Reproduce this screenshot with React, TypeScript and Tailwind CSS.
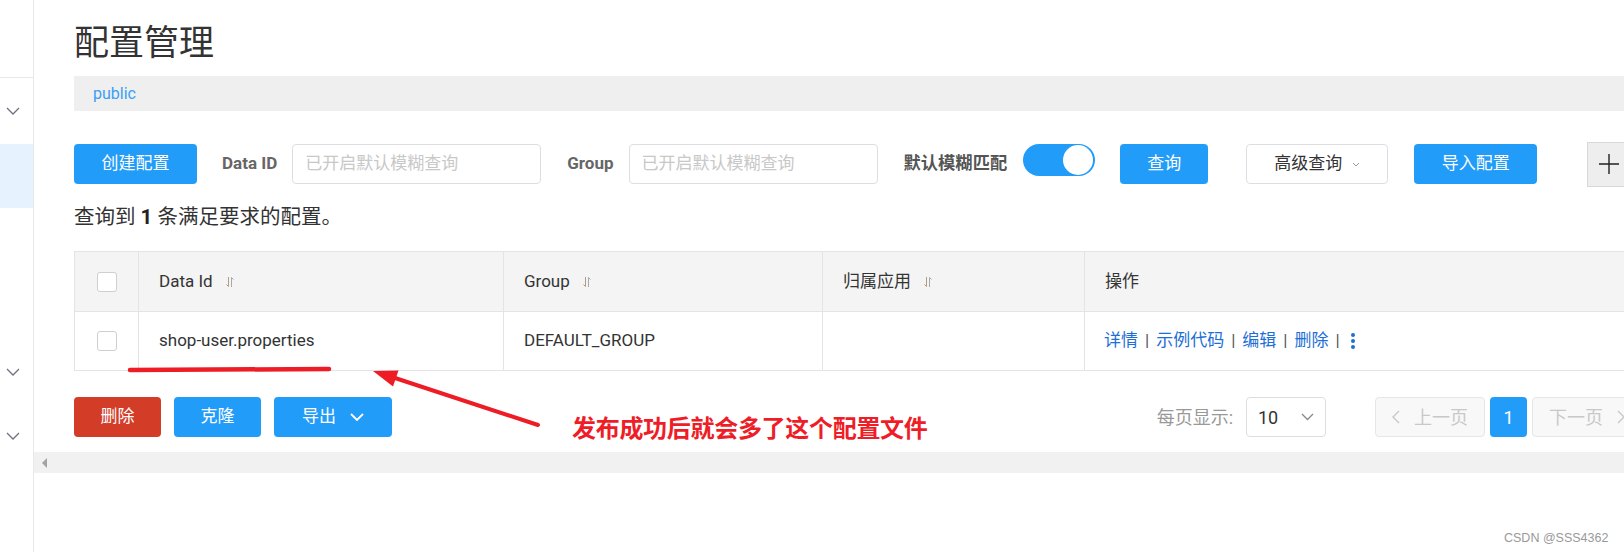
import React from "react";

function SideChevron() {
  return (
    <svg width="14" height="8" viewBox="0 0 14 8" fill="none">
      <path d="M1 1l6 6 6-6" stroke="#6b7280" strokeWidth="1.3" />
    </svg>
  );
}

function SortIcon() {
  return (
    <svg width="10" height="12" viewBox="0 0 10 12" fill="none" className="ml-[12px]">
      <path d="M3.5 1v9.5M3.5 10.5L1.5 8.5" stroke="#b39b84" strokeWidth="1" />
      <path d="M6.5 11V1.5M6.5 1.5l2 2" stroke="#a8a8a8" strokeWidth="1" />
    </svg>
  );
}

function Checkbox() {
  return <div className="w-[20px] h-[20px] rounded-[3px] border border-[#cfcfcf] bg-white" />;
}

function Sep() {
  return <span className="mx-[7px] text-[#555]">|</span>;
}

export default function App() {
  return (
    <div className="relative flex w-[1624px] h-[552px] overflow-hidden bg-white text-[#333] font-[family-name:Roboto,'Noto_Sans_CJK_SC',sans-serif]">
      {/* sidebar */}
      <aside className="w-[34px] shrink-0 border-r border-[#e8e8e8] flex flex-col">
        <div className="h-[78px] border-b border-[#e8e8e8]" />
        <div className="h-[66px] flex items-center pl-[6px]">
          <SideChevron />
        </div>
        <div className="h-[64px] bg-[#e6f2fd]" />
        <div className="h-[132px]" />
        <div className="h-[64px] flex items-center pl-[6px]">
          <SideChevron />
        </div>
        <div className="h-[64px] flex items-center pl-[6px]">
          <SideChevron />
        </div>
      </aside>

      {/* main */}
      <div className="flex-1 min-w-0 flex flex-col">
        <div className="pl-[40px] flex flex-col">
          <div className="h-[76px] pt-[26px]">
            <h1 className="text-[35px] leading-[36px] font-normal text-[#333]">配置管理</h1>
          </div>
          <div className="h-[35px] bg-[#efefef] flex items-center pl-[19px] text-[16px] text-[#3a9ff5]">
            public
          </div>

          {/* toolbar */}
          <div className="mt-[33px] h-[40px] flex items-center text-[17px] whitespace-nowrap">
            <button className="w-[123px] h-[40px] rounded-[4px] bg-[#229cf9] text-white shrink-0">创建配置</button>
            <span className="ml-[25px] font-bold text-[#666] text-[17px]">Data ID</span>
            <div className="ml-[15px] w-[249px] h-[40px] shrink-0 border border-[#dcdee3] rounded-[4px] flex items-center pl-[12px] text-[#c8c8c8]">
              已开启默认模糊查询
            </div>
            <span className="ml-[26px] font-bold text-[#666] text-[17px]">Group</span>
            <div className="ml-[15px] w-[249px] h-[40px] shrink-0 border border-[#dcdee3] rounded-[4px] flex items-center pl-[12px] text-[#c8c8c8]">
              已开启默认模糊查询
            </div>
            <span className="ml-[26px] font-bold text-[#555] text-[17.3px]">默认模糊匹配</span>
            <div className="ml-[16px] self-start w-[72px] h-[32px] shrink-0 rounded-full bg-[#229cf9] flex items-center justify-end pr-[2px]">
              <div className="w-[30px] h-[30px] rounded-full bg-white" />
            </div>
            <button className="ml-[25px] w-[88px] h-[40px] shrink-0 rounded-[4px] bg-[#229cf9] text-white">查询</button>
            <button className="ml-[38px] w-[142px] h-[40px] shrink-0 rounded-[4px] border border-[#dcdee3] bg-white text-[#333] flex items-center justify-center">
              高级查询
              <svg width="8" height="5" viewBox="0 0 8 5" fill="none" className="ml-[10px]">
                <path d="M1 1l3 3 3-3" stroke="#999" strokeWidth="1" />
              </svg>
            </button>
            <button className="ml-[26px] w-[123px] h-[40px] shrink-0 rounded-[4px] bg-[#229cf9] text-white">导入配置</button>
            <div className="ml-[50px] w-[60px] h-[45px] shrink-0 border border-[#d8d8d8] bg-[#eeeeee] flex items-center pl-[10px]">
              <svg width="22" height="22" viewBox="0 0 22 22" fill="none">
                <path d="M11 1v20M1 11h20" stroke="#222" strokeWidth="1.4" />
              </svg>
            </div>
          </div>

          {/* result */}
          <div className="h-[67px] flex items-center text-[20.5px] text-[#333] whitespace-nowrap">
            查询到&nbsp;<b className="font-bold text-[#222]">1</b>&nbsp;条满足要求的配置。
          </div>

          {/* table */}
          <div className="w-[1570px] shrink-0 border-t border-l border-[#e4e4e4] grid grid-cols-[64px_365px_319px_262px_1fr] text-[17px]">
            <div className="h-[60px] bg-[#f4f4f4] border-r border-b border-[#e4e4e4] flex items-center justify-center">
              <Checkbox />
            </div>
            <div className="h-[60px] bg-[#f4f4f4] border-r border-b border-[#e4e4e4] flex items-center px-[20px]">
              Data Id
              <SortIcon />
            </div>
            <div className="h-[60px] bg-[#f4f4f4] border-r border-b border-[#e4e4e4] flex items-center px-[20px]">
              Group
              <SortIcon />
            </div>
            <div className="h-[60px] bg-[#f4f4f4] border-r border-b border-[#e4e4e4] flex items-center px-[20px]">
              归属应用
              <SortIcon />
            </div>
            <div className="h-[60px] bg-[#f4f4f4] border-r border-b border-[#e4e4e4] flex items-center px-[20px]">
              操作
            </div>

            <div className="h-[59px] border-r border-b border-[#e4e4e4] flex items-center justify-center">
              <Checkbox />
            </div>
            <div className="h-[59px] border-r border-b border-[#e4e4e4] flex items-center px-[20px]">
              shop-user.properties
            </div>
            <div className="h-[59px] border-r border-b border-[#e4e4e4] flex items-center px-[20px]">
              DEFAULT_GROUP
            </div>
            <div className="h-[59px] border-r border-b border-[#e4e4e4]" />
            <div className="h-[59px] border-r border-b border-[#e4e4e4] flex items-center px-[19px] text-[#1d6fd6] whitespace-nowrap">
              <span>详情</span>
              <Sep />
              <span>示例代码</span>
              <Sep />
              <span>编辑</span>
              <Sep />
              <span>删除</span>
              <Sep />
              <svg width="6" height="18" viewBox="0 0 6 18" className="ml-[3px]">
                <circle cx="3" cy="3" r="2" fill="#1d6fd6" />
                <circle cx="3" cy="9" r="2" fill="#1d6fd6" />
                <circle cx="3" cy="15" r="2" fill="#1d6fd6" />
              </svg>
            </div>
          </div>

          {/* bottom bar */}
          <div className="mt-[26px] h-[40px] w-[1568px] shrink-0 flex items-center text-[17px] whitespace-nowrap">
            <button className="w-[87px] h-[40px] rounded-[4px] bg-[#d33c27] text-white">删除</button>
            <button className="ml-[13px] w-[87px] h-[40px] rounded-[4px] bg-[#229cf9] text-white">克隆</button>
            <button className="ml-[13px] w-[118px] h-[40px] rounded-[4px] bg-[#229cf9] text-white flex items-center justify-center">
              导出
              <svg width="14" height="8" viewBox="0 0 14 8" fill="none" className="ml-[14px]">
                <path d="M1 1l6 6 6-6" stroke="#fff" strokeWidth="1.8" />
              </svg>
            </button>

            <div className="ml-auto flex items-center">
              <span className="text-[#999] text-[18px]">每页显示:</span>
              <div className="ml-[13px] w-[80px] h-[40px] rounded-[4px] border border-[#dcdee3] flex items-center justify-between px-[11px] text-[#333] text-[18px]">
                <span>10</span>
                <svg width="13" height="8" viewBox="0 0 13 8" fill="none">
                  <path d="M1 1l5.5 5.5L12 1" stroke="#888" strokeWidth="1.3" />
                </svg>
              </div>
              <div className="ml-[49px] w-[110px] h-[40px] rounded-[4px] border border-[#e6e6e6] bg-[#f8f8f8] flex items-center justify-center text-[#c8c8c8] text-[18px]">
                <svg width="8" height="14" viewBox="0 0 8 14" fill="none" className="mr-[14px]">
                  <path d="M7 1L1 7l6 6" stroke="#c8c8c8" strokeWidth="1.4" />
                </svg>
                上一页
              </div>
              <div className="ml-[5px] w-[37px] h-[40px] rounded-[4px] bg-[#229cf9] flex items-center justify-center text-white text-[18px]">
                1
              </div>
              <div className="ml-[5px] w-[110px] h-[40px] rounded-[4px] border border-[#e6e6e6] bg-[#f8f8f8] flex items-center justify-center text-[#c8c8c8] text-[18px]">
                下一页
                <svg width="8" height="14" viewBox="0 0 8 14" fill="none" className="ml-[14px]">
                  <path d="M1 1l6 6-6 6" stroke="#c8c8c8" strokeWidth="1.4" />
                </svg>
              </div>
            </div>
          </div>
        </div>

        {/* horizontal scrollbar */}
        <div className="mt-[15px] h-[21px] bg-[#f1f1f1] flex items-center pl-[8px]">
          <svg width="6" height="10" viewBox="0 0 6 10">
            <path d="M5 0v10L0 5z" fill="#a3a3a3" />
          </svg>
        </div>
      </div>

      {/* annotation overlay */}
      <svg className="absolute inset-0 pointer-events-none" width="1624" height="552" viewBox="0 0 1624 552">
        <line x1="130" y1="370" x2="329" y2="369" stroke="#ee1c25" strokeWidth="4.5" strokeLinecap="round" />
        <line x1="538" y1="425" x2="392" y2="377" stroke="#ee1c25" strokeWidth="4" strokeLinecap="round" />
        <path d="M373 371 L398.5 370.5 L393 386.5 Z" fill="#ee1c25" />
      </svg>
      <div className="absolute left-[572px] top-[413px] text-[24px] leading-[28px] font-bold text-[#ee1d27] tracking-[-0.3px] whitespace-nowrap font-[family-name:'Noto_Sans_CJK_SC',sans-serif]">
        发布成功后就会多了这个配置文件
      </div>
      <div className="absolute left-[1504px] top-[530px] text-[12.5px] leading-[16px] text-[#9a9a9a] whitespace-nowrap font-[family-name:'Liberation_Sans',sans-serif]">
        CSDN @SSS4362
      </div>
    </div>
  );
}
